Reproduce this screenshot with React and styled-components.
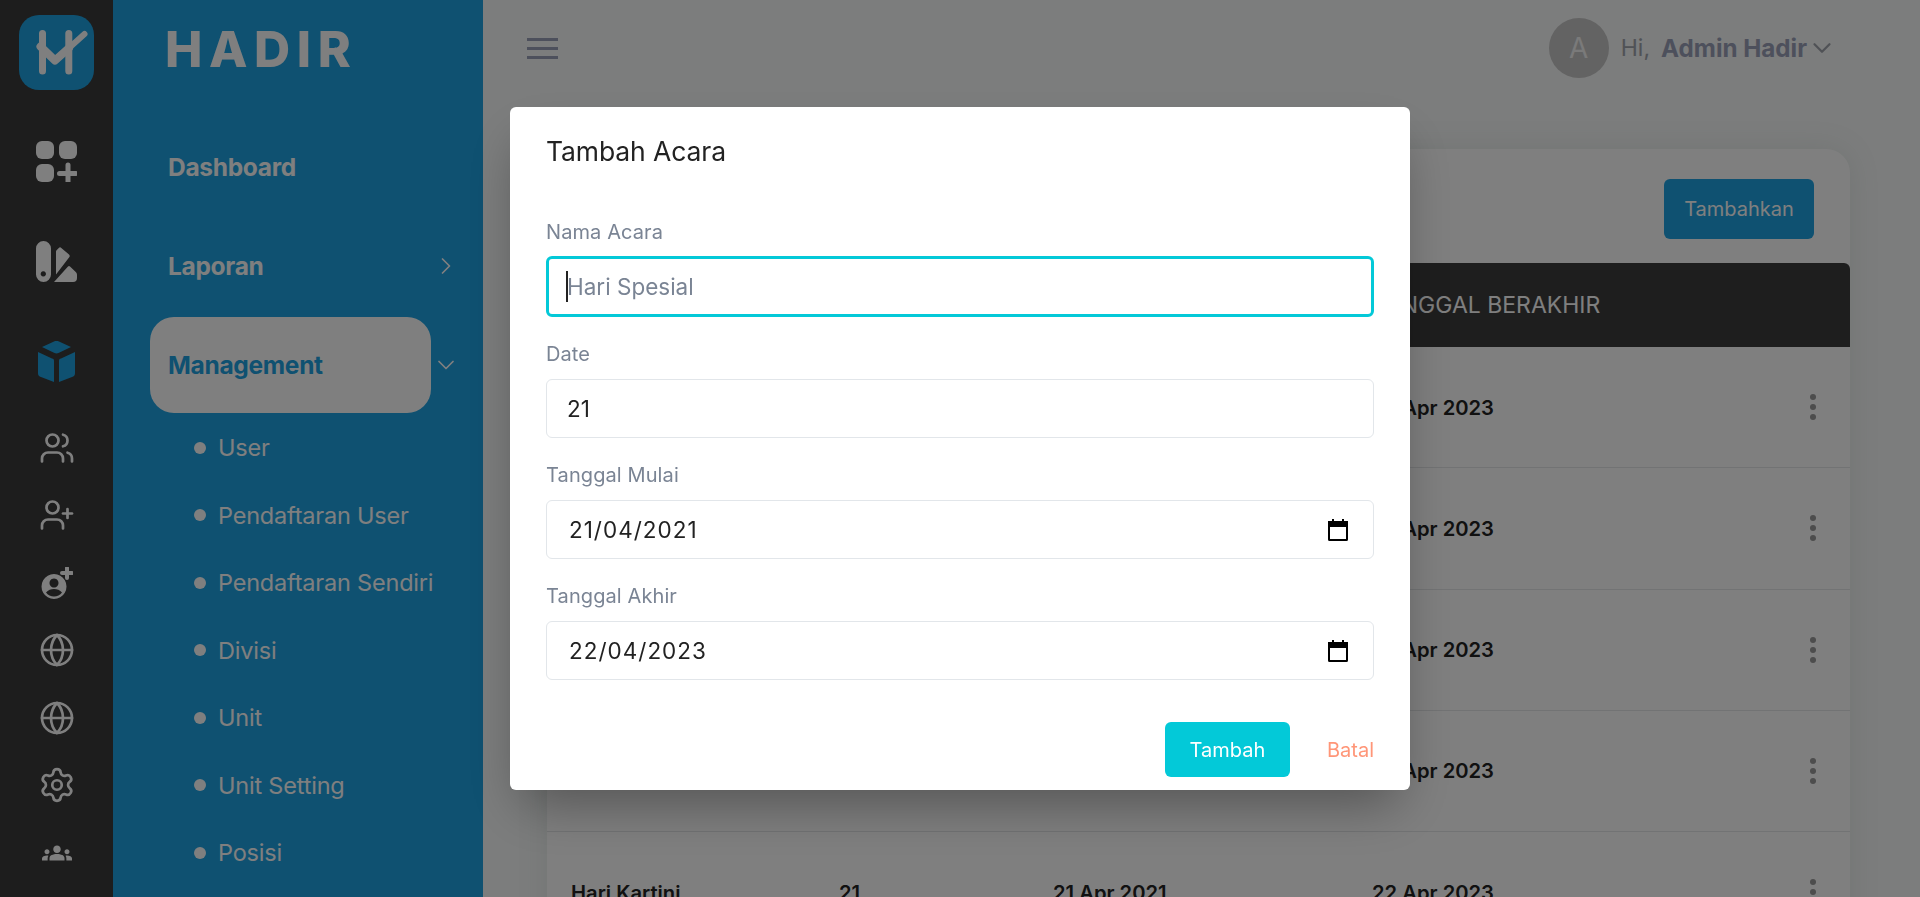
import React from 'react';
import styled, { createGlobalStyle } from 'styled-components';
import { ChevronDown, ChevronRight, Globe, Settings, UserPlus, Users } from 'lucide-react';
import { MdGroups } from 'react-icons/md';

const GlobalStyle = createGlobalStyle`
  html, body {
    margin: 0;
    height: 897px;
    overflow: hidden;
    background: #f8fafa;
    font-family: Inter, "Liberation Sans", sans-serif;
  }
  * { box-sizing: border-box; }
`;

const Page = styled.div`
  display: flex;
  height: 897px;
  overflow: hidden;
`;

const Rail = styled.nav`
  width: 113px;
  flex: none;
  background: #3a3a3a;
  display: flex;
  flex-direction: column;
  align-items: center;
  padding-top: 15px;
  color: #fff;
`;

const LogoBox = styled.div`
  width: 75px;
  height: 75px;
  border-radius: 20px;
  background: #1ea2e2;
  margin-bottom: 21px;
`;

const RailItem = styled.div`
  height: ${(p) => (p.$big ? '100px' : '67.5px')};
  display: flex;
  align-items: center;
  justify-content: center;
  color: ${(p) => (p.$active ? '#1ea2e2' : '#fff')};
`;

const RailGap = styled.div`
  height: 3px;
  flex: none;
`;

const Sidebar = styled.aside`
  width: 370px;
  flex: none;
  background: #1ea2e2;
  color: #fff;
`;

const Brand = styled.div`
  height: 119px;
  padding: 20px 0 0 52px;
  font-size: 50px;
  font-weight: 800;
  letter-spacing: 6.6px;
  line-height: 58px;
`;

const Menu = styled.div`
  display: flex;
  flex-direction: column;
  gap: 3px;
`;

const MenuRow = styled.div`
  display: flex;
  align-items: center;
  padding-left: 37px;
`;

const MenuLabel = styled.div`
  width: 281px;
  height: 96px;
  padding-left: 18px;
  display: flex;
  align-items: center;
  border-radius: 24px;
  font-size: 24.5px;
  font-weight: 700;
  letter-spacing: -0.3px;
  background: ${(p) => (p.$active ? '#fff' : 'transparent')};
  color: ${(p) => (p.$active ? '#1ea2e2' : '#fff')};
`;

const MenuCaret = styled.div`
  margin-left: 1px;
  display: flex;
  color: #fff;
`;

const SubList = styled.div`
  padding: 1px 0 0 81px;
`;

const SubItem = styled.div`
  height: 67.5px;
  display: flex;
  align-items: center;
  gap: 12px;
  font-size: 23.5px;
  letter-spacing: -0.2px;
  &::before {
    content: '';
    width: 12px;
    height: 12px;
    border-radius: 50%;
    background: #fff;
    flex: none;
  }
`;

const Main = styled.main`
  flex: 1;
  min-width: 0;
`;

const Topbar = styled.header`
  height: 96px;
  display: flex;
  align-items: center;
  justify-content: space-between;
  padding: 0 83px 0 44px;
`;

const Burger = styled.div`
  width: 31px;
  display: flex;
  flex-direction: column;
  gap: 6px;
  span {
    height: 3px;
    background: #9aa0b8;
  }
`;

const UserBox = styled.div`
  display: flex;
  align-items: center;
  font-size: 23px;
  color: #a0a4ac;
`;

const Avatar = styled.div`
  width: 60px;
  height: 60px;
  border-radius: 50%;
  background: #c6c6c6;
  color: #f4f4f4;
  display: flex;
  align-items: center;
  justify-content: center;
  font-size: 28px;
  margin-right: 12px;
`;

const UserName = styled.b`
  margin-left: 11px;
  font-size: 24.2px;
  font-weight: 700;
  color: #9aa0b8;
`;

const Card = styled.section`
  margin: 53px 70px 0 64px;
  background: #fff;
  border-radius: 24px 24px 0 0;
  box-shadow: 0 0 30px rgba(120, 140, 130, 0.15);
`;

const CardHead = styled.div`
  display: flex;
  justify-content: flex-end;
  padding: 30px 36px 24px 0;
`;

const AddButton = styled.button`
  width: 150px;
  height: 60px;
  border: 0;
  border-radius: 6px;
  background: #1ea2e2;
  color: #fff;
  font: 400 20px Inter, sans-serif;
`;

const Row = styled.div`
  display: grid;
  grid-template-columns: 268px 214px 319px 1fr 8px;
  align-items: center;
  padding: 0 32px 0 24px;
  height: ${(p) => (p.$head ? '84px' : '121.25px')};
  border-bottom: ${(p) => (p.$head ? '0' : '1px solid #e4e6e8')};
  border-radius: ${(p) => (p.$head ? '6px 6px 0 0' : '0')};
  background: ${(p) => (p.$head ? '#3c3c3c' : 'transparent')};
  color: ${(p) => (p.$head ? '#fff' : '#222')};
  font-size: ${(p) => (p.$head ? '23px' : '20.2px')};
  font-weight: ${(p) => (p.$head ? 400 : 600)};
`;

const Kebab = styled.div`
  display: flex;
  flex-direction: column;
  gap: 4px;
  i {
    width: 6px;
    height: 6px;
    border-radius: 50%;
    background: #9a9a9a;
  }
`;

const Overlay = styled.div`
  position: fixed;
  inset: 0;
  background: rgba(0, 0, 0, 0.5);
  display: flex;
  justify-content: center;
  align-items: flex-start;
  padding-top: 107px;
`;

const Modal = styled.div`
  width: 900px;
  height: 683px;
  background: #fff;
  border-radius: 6px;
  padding: 27px 36px 0;
  box-shadow: 0 25px 50px -12px rgba(0, 0, 0, 0.35);
`;

const ModalTitle = styled.h2`
  margin: 0 0 43px;
  font-size: 26.5px;
  line-height: 34px;
  font-weight: 400;
  letter-spacing: -0.1px;
  color: #222;
`;

const Field = styled.div`
  margin-bottom: 16px;
`;

const Label = styled.label`
  display: block;
  height: 46px;
  padding-top: 9px;
  font-size: 20px;
  line-height: 24px;
  letter-spacing: 0.1px;
  color: #7a8494;
`;

const InputWrap = styled.div`
  position: relative;
  height: ${(p) => (p.$focus ? '61px' : '59px')};
  margin-top: ${(p) => (p.$focus ? '-1px' : '0')};
  display: flex;
  align-items: center;
  padding: 0 ${(p) => (p.$focus ? '18px' : '20px')};
  border: ${(p) => (p.$focus ? '3px solid #03c9d8' : '1px solid #e2e6ea')};
  border-radius: 6px;
`;

const Input = styled.input`
  flex: 1;
  min-width: 0;
  border: 0;
  outline: 0;
  padding: 0 0 0 ${(p) => (p.$date ? '2px' : '0')};
  background: transparent;
  font: 400 22.5px Inter, sans-serif;
  letter-spacing: ${(p) => (p.$date ? '1px' : '0')};
  color: #222;
  caret-color: transparent;
  &::placeholder { color: #7a8494; opacity: 1; }
`;

const Caret = styled.span`
  position: absolute;
  left: 17px;
  top: 12px;
  width: 2px;
  height: 31px;
  background: #222;
`;

const ModalFoot = styled.div`
  display: flex;
  justify-content: flex-end;
  align-items: center;
  gap: 37px;
  margin-top: 42px;
`;

const SubmitButton = styled.button`
  width: 125px;
  height: 55px;
  border: 0;
  border-radius: 6px;
  background: #03c9d8;
  color: #fff;
  font: 400 20px Inter, sans-serif;
`;

const CancelLink = styled.span`
  font-size: 20px;
  color: #ff9678;
`;

const HLogo = () => (
  <svg width="75" height="75" viewBox="0 0 75 75" fill="none" stroke="#fff" strokeLinecap="round" strokeLinejoin="round">
    <path d="M23.5 18.500V56M49.800 18.500V56" strokeWidth="7" />
    <path d="M21.500 31.500L36 45.500L50 33" strokeWidth="8" />
    <path d="M50 33L65.500 19" strokeWidth="6" />
  </svg>
);

const GridPlus = () => (
  <svg width="41" height="41" viewBox="0 0 41 41" fill="currentColor">
    <rect width="18" height="18" rx="6" />
    <rect x="23" width="18" height="18" rx="6" />
    <rect y="23" width="18" height="18" rx="6" />
    <path d="M32 24v17M23.5 32.5H40" stroke="currentColor" strokeWidth="5" strokeLinecap="round" />
  </svg>
);

const Swatch = () => (
  <svg width="41" height="41" viewBox="0 0 41 41" fill="currentColor">
    <path fillRule="evenodd" d="M7.500 0a7.500 7.500 0 0 1 7.500 7.500v26a7.500 7.500 0 0 1-15 0v-26A7.500 7.500 0 0 1 7.500 0zM7.300 30.300a2.600 2.600 0 1 0 .01 0z" />
    <path d="M20 11a2.500 2.500 0 0 1 .8-2l2-2a1.800 1.800 0 0 1 2.500-.1L33 13.500a2 2 0 0 1 .2 2.700L20 33.500z" />
    <path d="M18 41L32 25.500a1.400 1.400 0 0 1 2-.1L39.500 30.700a4 4 0 0 1 1.500 3V37a4 4 0 0 1-4 4z" />
  </svg>
);

const Cube = () => (
  <svg width="37" height="41" viewBox="0 2 37 41" fill="currentColor">
    <path d="M16 2.500a5 5 0 0 1 5 0l12 5.500-12.500 6a5 5 0 0 1-4 0L4 8z" />
    <path d="M0 13l14 6.500a2 2 0 0 1 2 2V43L3 38a4 4 0 0 1-3-4z" />
    <path d="M37 13l-14 6.500a2 2 0 0 0-2 2V43l13-5a4 4 0 0 0 3-4z" />
  </svg>
);

const UserCirclePlus = () => (
  <svg width="32" height="32" viewBox="0 0 32 32" fill="currentColor">
    <path fillRule="evenodd" d="M13 7a12.500 12.500 0 1 0 .01 0zM13 11.500a4.500 4.500 0 1 1-.01 0zM13 22c3 0 6 1 8 3.500a10 10 0 0 1-16 0c2-2.500 5-3.500 8-3.500z" />
    <path d="M26 1v10M21 6h10" stroke="currentColor" strokeWidth="4" strokeLinecap="round" />
  </svg>
);

const CalendarIcon = () => (
  <svg width="20" height="22" viewBox="0 0 20 22" fill="none" style={{ flex: 'none', marginRight: 5 }}>
    <path d="M1 5h18v15.500a.500.500 0 0 1-.500.500H1.500a.500.500 0 0 1-.500-.500z" stroke="#000" strokeWidth="2" />
    <path d="M0 2h20v6H0zM4 0h2v3H4zM14 0h2v3h-2z" fill="#000" />
  </svg>
);

const subItems = ['User', 'Pendaftaran User', 'Pendaftaran Sendiri', 'Divisi', 'Unit', 'Unit Setting', 'Posisi'];

const rows = [1, 2, 3, 4, 5];

const dateFields = [
  { label: 'Tanggal Mulai', value: '21/04/2021' },
  { label: 'Tanggal Akhir', value: '22/04/2023' },
];

export default function App() {
  return (
    <>
      <GlobalStyle />
      <Page>
        <Rail>
          <LogoBox><HLogo /></LogoBox>
          <RailItem $big><GridPlus /></RailItem>
          <RailItem $big><Swatch /></RailItem>
          <RailItem $big $active><Cube /></RailItem>
          <RailGap />
          <RailItem><Users size={36} strokeWidth={1.8} /></RailItem>
          <RailItem><UserPlus size={36} strokeWidth={1.8} /></RailItem>
          <RailItem><UserCirclePlus /></RailItem>
          <RailItem><Globe size={36} strokeWidth={1.8} /></RailItem>
          <RailItem><Globe size={36} strokeWidth={1.8} /></RailItem>
          <RailItem><Settings size={38} strokeWidth={1.7} /></RailItem>
          <RailItem><MdGroups size={30} /></RailItem>
        </Rail>

        <Sidebar>
          <Brand>HADIR</Brand>
          <Menu>
            <MenuRow><MenuLabel>Dashboard</MenuLabel></MenuRow>
            <MenuRow>
              <MenuLabel>Laporan</MenuLabel>
              <MenuCaret><ChevronRight size={28} strokeWidth={1.5} /></MenuCaret>
            </MenuRow>
            <MenuRow>
              <MenuLabel $active>Management</MenuLabel>
              <MenuCaret><ChevronDown size={28} strokeWidth={1.5} /></MenuCaret>
            </MenuRow>
          </Menu>
          <SubList>
            {subItems.map((item) => <SubItem key={item}>{item}</SubItem>)}
          </SubList>
        </Sidebar>

        <Main>
          <Topbar>
            <Burger><span /><span /><span /></Burger>
            <UserBox>
              <Avatar>A</Avatar>
              Hi, <UserName>Admin Hadir</UserName>
              <ChevronDown size={30} strokeWidth={1.8} />
            </UserBox>
          </Topbar>
          <Card>
            <CardHead><AddButton>Tambahkan</AddButton></CardHead>
            <Row $head>
              <div>NAMA ACARA</div>
              <div>DATE</div>
              <div>TANGGAL MULAI</div>
              <div>TANGGAL BERAKHIR</div>
              <div />
            </Row>
            {rows.map((r) => (
              <Row key={r}>
                <div>Hari Kartini</div>
                <div>21</div>
                <div>21 Apr 2021</div>
                <div>22 Apr 2023</div>
                <Kebab><i /><i /><i /></Kebab>
              </Row>
            ))}
          </Card>
        </Main>
      </Page>

      <Overlay>
        <Modal>
          <ModalTitle>Tambah Acara</ModalTitle>
          <Field>
            <Label>Nama Acara</Label>
            <InputWrap $focus>
              <Input placeholder="Hari Spesial" />
              <Caret />
            </InputWrap>
          </Field>
          <Field>
            <Label>Date</Label>
            <InputWrap><Input defaultValue="21" /></InputWrap>
          </Field>
          {dateFields.map((f) => (
            <Field key={f.label}>
              <Label>{f.label}</Label>
              <InputWrap>
                <Input $date defaultValue={f.value} />
                <CalendarIcon />
              </InputWrap>
            </Field>
          ))}
          <ModalFoot>
            <SubmitButton>Tambah</SubmitButton>
            <CancelLink>Batal</CancelLink>
          </ModalFoot>
        </Modal>
      </Overlay>
    </>
  );
}
